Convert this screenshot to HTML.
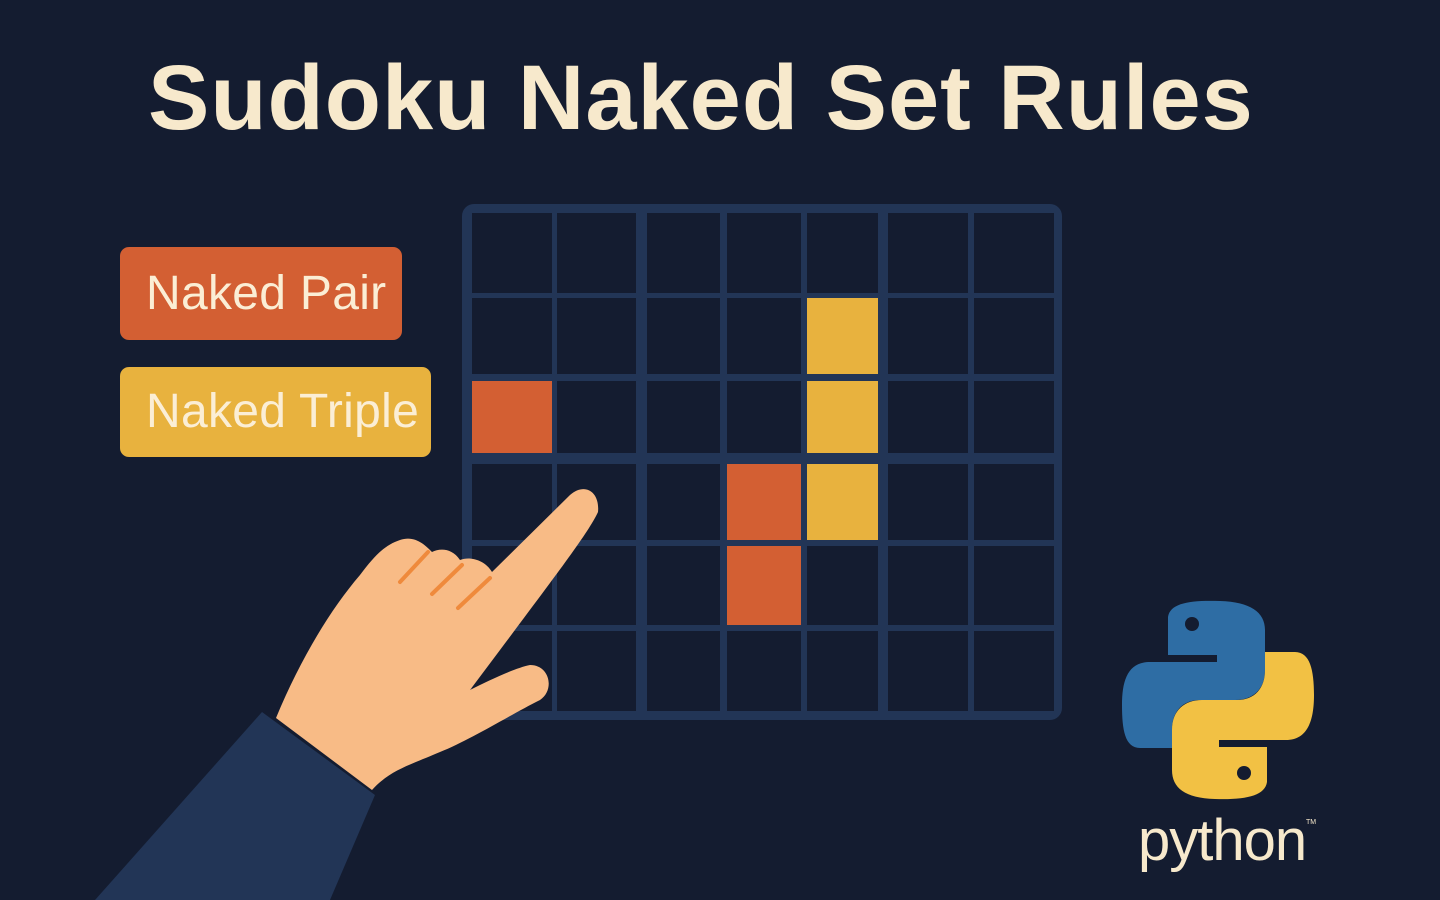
<!DOCTYPE html>
<html><head><meta charset="utf-8"><style>
html,body{margin:0;padding:0}
body{width:1440px;height:900px;background:#141c30;position:relative;overflow:hidden;font-family:"Liberation Sans",sans-serif}
.t{position:absolute;left:148px;top:46px;font-size:92px;font-weight:bold;color:#f7e9cc;white-space:nowrap;letter-spacing:1px}
.lab{position:absolute;border-radius:9px;color:#fbeed5;font-size:48px;box-sizing:border-box;padding-left:26px;white-space:nowrap;letter-spacing:0.3px}
.c{position:absolute}
</style></head><body>
<div class="t">Sudoku Naked Set Rules</div>
<div class="lab" style="left:120px;top:247px;width:282px;height:93px;line-height:93px;background:#d35f33">Naked Pair</div>
<div class="lab" style="left:120px;top:367px;width:311px;height:90px;line-height:90px;background:#e8b23e">Naked Triple</div>
<div class="c" style="left:462px;top:204px;width:600px;height:516px;background:#223556;border-radius:12px"></div>
<div id="g"></div>
<svg width="1440" height="900" style="position:absolute;left:0;top:0">
<path d="M95,900 L262,712 L375,795 L330,900 Z" fill="#223556"/>
<path d="M276,718 C300,660 330,610 360,575 C375,555 385,545 400,540 C415,535 425,545 432,552 C440,548 452,548 460,560 C470,556 485,560 492,572 L570,495 C585,482 600,492 598,512 C590,530 560,570 500,650 L470,690 C490,680 515,668 530,665 C550,665 555,690 540,700 C510,715 470,740 440,752 C410,765 390,770 372,790 Z" fill="#f8bb86"/>
<path d="M400,582 L428,552 M432,594 L462,565 M458,608 L490,578" stroke="#ef8a3c" stroke-width="4" stroke-linecap="round"/>
<g>
<path d="M1168,617 C1170,603 1190,600 1220,601 C1250,602 1265,612 1265,630 L1265,670 C1265,690 1252,700 1235,700 L1200,700 C1182,700 1172,712 1172,730 L1172,748 L1140,748 C1125,748 1122,730 1122,705 C1122,680 1128,662 1150,662 L1217,662 L1217,655 L1168,655 Z" fill="#2e6da4"/>
<circle cx="1192" cy="624" r="7" fill="#141c30"/>
<path d="M1267,782 C1265,796 1245,800 1215,799 C1185,798 1172,788 1172,770 L1172,730 C1172,710 1185,700 1202,700 L1237,700 C1255,700 1265,688 1265,670 L1265,652 L1295,652 C1310,652 1314,670 1314,695 C1314,720 1308,740 1286,740 L1219,740 L1219,747 L1267,747 Z" fill="#f2c144"/>
<circle cx="1244" cy="773" r="7" fill="#141c30"/>
</g>
<text x="1138" y="860" font-family="Liberation Sans, sans-serif" font-size="58" fill="#f7e9cc" letter-spacing="-1">python</text>
<text x="1306" y="824" font-family="Liberation Sans, sans-serif" font-size="7" fill="#f7e9cc">TM</text>
</svg>
<script>
var xs=[[472,552],[557,636],[647,720],[727,801],[807,878],[888,968],[974,1054]];
var ys=[[213,293],[298,374],[381,453],[464,540],[546,625],[631,711]];
var col={"4,1":"#e8b23e","4,2":"#e8b23e","4,3":"#e8b23e","0,2":"#d35f33","3,3":"#d35f33","3,4":"#d35f33"};
var s="";
for(var r=0;r<6;r++)for(var c=0;c<7;c++){var k=c+","+r;s+='<div class="c" style="left:'+xs[c][0]+'px;top:'+ys[r][0]+'px;width:'+(xs[c][1]-xs[c][0])+'px;height:'+(ys[r][1]-ys[r][0])+'px;background:'+(col[k]||'#141c30')+'"></div>';}
document.getElementById("g").innerHTML=s;
</script>
</body></html>
